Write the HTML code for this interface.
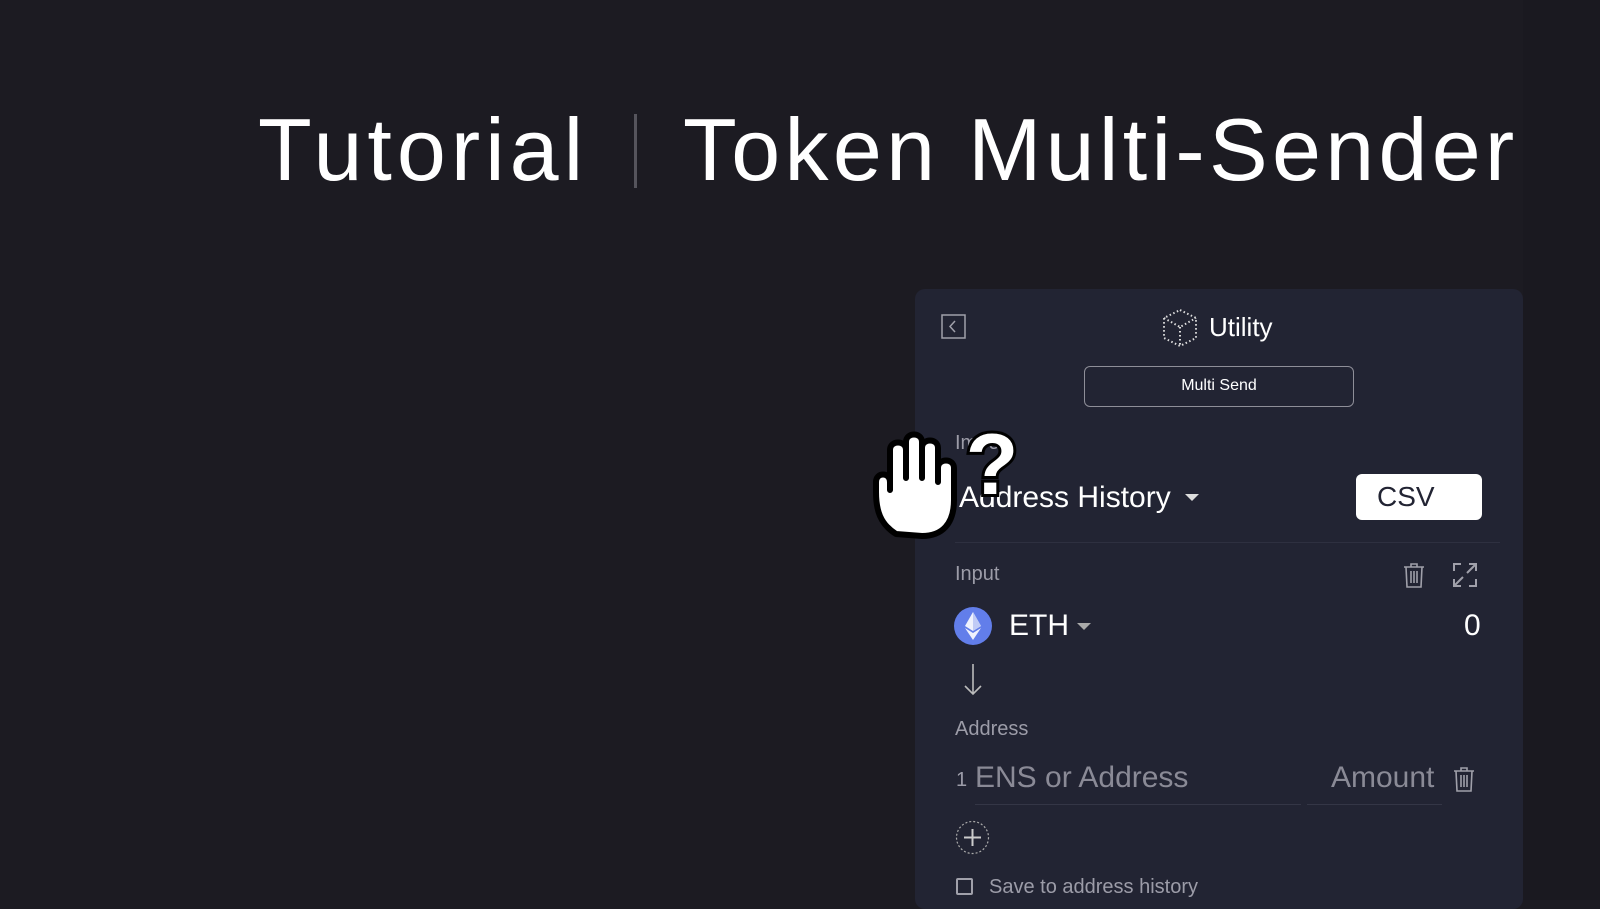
<!DOCTYPE html>
<html><head><meta charset="utf-8"><style>
*{margin:0;padding:0;box-sizing:border-box}
body{width:1600px;height:900px;overflow:hidden;background:#1c1b22;font-family:"Liberation Sans",sans-serif;position:relative;color:#fff}
.a{position:absolute;white-space:nowrap}
.t{font-size:88px;letter-spacing:5px;top:100px;line-height:100px;color:#fff}
.g{color:#9c9ca8;font-size:20px}
</style></head><body>
<div class="a" style="left:1523px;top:0;width:77px;height:900px;background:#1a1920"></div>
<div class="a t" style="left:258px">Tutorial</div>
<div class="a" style="left:634px;top:114px;width:3px;height:74px;background:#55545c"></div>
<div class="a t" style="left:683px;letter-spacing:4.3px">Token Multi-Sender</div>

<div class="a" style="left:915px;top:289px;width:608px;height:620px;background:#222433;border-radius:10px"></div>
<svg class="a" style="left:941px;top:314px" width="25" height="25" viewBox="0 0 25 25"><rect x="1" y="1" width="23" height="23" fill="none" stroke="#a0a0aa" stroke-width="1.5"/><path d="M14 7l-5 5.5 5 5.5" fill="none" stroke="#a0a0aa" stroke-width="1.5"/></svg>
<svg class="a" style="left:1162px;top:308px" width="36" height="40" viewBox="0 0 36 40"><g fill="none" stroke="#ddd" stroke-width="2" stroke-dasharray="1.5 2.5"><path d="M18 2L34 10V30L18 38L2 30V10Z"/><path d="M2 10L18 19L34 10M18 19V38"/></g></svg>
<div class="a" style="left:1209px;top:312px;font-size:26px">Utility</div>
<div class="a" style="left:1084px;top:366px;width:270px;height:41px;border:1.5px solid #8e8e98;border-radius:6px;font-size:16px;text-align:center;line-height:38px">Multi Send</div>
<div class="a g" style="left:955px;top:432px">Import</div>
<div class="a" style="left:959px;top:481px;font-size:30px">Address History</div>
<svg class="a" style="left:1185px;top:494px" width="14" height="8"><path d="M0 0H14L7 7Z" fill="#ddd"/></svg>
<div class="a" style="left:1356px;top:474px;width:126px;height:46px;background:#fff;border-radius:6px;color:#222433;font-size:28px;line-height:46px;padding-left:21px">CSV</div>
<div class="a" style="left:955px;top:542px;width:545px;height:1px;background:#2e3040"></div>
<div class="a g" style="left:955px;top:563px">Input</div>
<svg class="a" style="left:1403px;top:562px" width="22" height="26" viewBox="0 0 22 26"><g fill="none" stroke="#a0a0aa" stroke-width="1.6"><path d="M1 5H21M8 5V2H14V5M3 5L4 25H18L19 5M8 9V21M11 9V21M14 9V21"/></g></svg>
<svg class="a" style="left:1453px;top:563px" width="24" height="24" viewBox="0 0 24 24"><g fill="none" stroke="#a0a0aa" stroke-width="2"><path d="M1 8V1H8M16 1H23V8M23 16V23H16M8 23H1V16M22 2L14 10M2 22L10 14"/></g></svg>
<svg class="a" style="left:954px;top:607px" width="38" height="38" viewBox="0 0 38 38"><circle cx="19" cy="19" r="19" fill="#627eea"/><path d="M19 5L11 19L19 24L27 19Z" fill="#fff" opacity=".9"/><path d="M19 26L11 21L19 33L27 21Z" fill="#fff" opacity=".9"/><path d="M19 5V24L27 19Z" fill="#c0cbf6"/></svg>
<div class="a" style="left:1009px;top:609px;font-size:30px">ETH</div>
<svg class="a" style="left:1077px;top:623px" width="14" height="8"><path d="M0 0H14L7 7Z" fill="#aaa"/></svg>
<div class="a" style="left:1464px;top:609px;font-size:30px">0</div>
<svg class="a" style="left:963px;top:664px" width="20" height="32"><path d="M10 0V30M2 22L10 30L18 22" fill="none" stroke="#bbb" stroke-width="1.6"/></svg>
<div class="a g" style="left:955px;top:718px">Address</div>
<div class="a g" style="left:956px;top:769px">1</div>
<div class="a" style="left:975px;top:761px;font-size:30px;color:#8a8a96">ENS or Address</div>
<div class="a" style="left:1331px;top:761px;font-size:30px;color:#8a8a96">Amount</div>
<svg class="a" style="left:1453px;top:766px" width="22" height="26" viewBox="0 0 22 26"><g fill="none" stroke="#a0a0aa" stroke-width="1.6"><path d="M1 5H21M8 5V2H14V5M3 5L4 25H18L19 5M8 9V21M11 9V21M14 9V21"/></g></svg>
<div class="a" style="left:975px;top:804px;width:326px;height:1px;background:#343646"></div>
<div class="a" style="left:1307px;top:804px;width:135px;height:1px;background:#343646"></div>
<svg class="a" style="left:955px;top:820px" width="35" height="35"><circle cx="17.5" cy="17.5" r="16" fill="none" stroke="#aaa" stroke-width="1.2" stroke-dasharray="2 2"/><path d="M17.5 9V26M9 17.5H26" stroke="#ccc" stroke-width="2"/></svg>
<div class="a" style="left:956px;top:878px;width:17px;height:17px;border:2px solid #a0a0aa;border-radius:2px"></div>
<div class="a g" style="left:989px;top:876px">Save to address history</div>

<svg class="a" style="left:868px;top:420px" width="150" height="122" viewBox="0 0 150 122">
<path d="M28 114 C12 104 8 90 8 72 V62 C8 52 22 52 22 62 V70 V30 C22 20 38 20 38 30 V58 V22 C38 12 54 12 54 22 V58 V28 C54 18 70 18 70 28 V62 V48 C70 38 86 38 86 48 V80 C86 104 74 116 54 116 Z" fill="#fff" stroke="#000" stroke-width="6" stroke-linejoin="round"/>
<path d="M38 58V40M54 58V40M70 62V50" stroke="#000" stroke-width="3" fill="none"/>
<text x="124" y="74" text-anchor="middle" font-family="Liberation Sans,sans-serif" font-weight="bold" font-size="86" fill="#fff" stroke="#000" stroke-width="6" paint-order="stroke">?</text>
</svg>
</body></html>
